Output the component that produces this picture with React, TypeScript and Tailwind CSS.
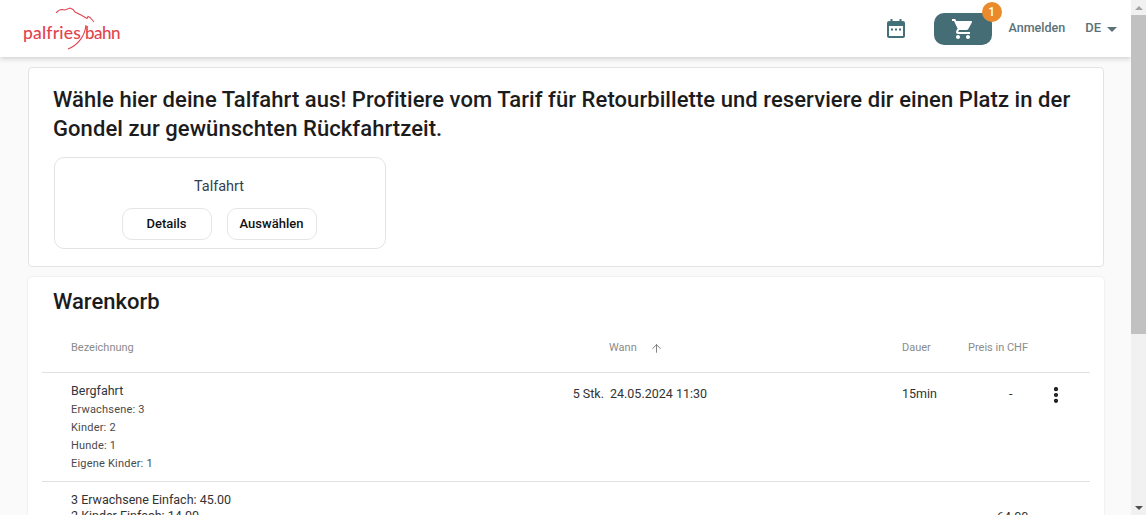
import { ArrowUp, EllipsisVertical } from 'lucide-react';

function Logo() {
  return (
    <div className="relative w-[100px] h-[46px] mt-[6px]">
      {/* Mountain ridge and the slash between the words */}
      <svg className="absolute left-0 top-0" width="100" height="46" viewBox="0 0 100 46" fill="none">
        <path
          d="M33 7 C35 4.5 37 3.5 39 3.5 L42 4 L47 2 L50 3.5 L52 6 L58 9 L64 12.5 L65 10.5 L67 11.5 L71 16"
          stroke="#e2444e"
          strokeWidth="1.1"
        />
        <path d="M63 19 C62 30 55 39 45 43" stroke="#e2444e" strokeWidth="1.1" />
      </svg>
      <span className="absolute left-0 top-[15px] font-['Lato',sans-serif] text-[17.5px] leading-[24px] font-medium text-[#e2444e] tracking-[0.2px]">
        palfries
      </span>
      <span className="absolute left-[62px] top-[15px] font-['Lato',sans-serif] text-[17px] leading-[24px] font-medium text-[#e2444e] tracking-[-0.5px]">
        bahn
      </span>
    </div>
  );
}

function CalendarIcon() {
  return (
    <svg width="18" height="19" viewBox="0 0 18 19" fill="#44707a">
      <rect x="3.5" y="0" width="2" height="3" />
      <rect x="12.5" y="0" width="2" height="3" />
      <path d="M2 2h14a2 2 0 0 1 2 2v13a2 2 0 0 1-2 2H2a2 2 0 0 1-2-2V4a2 2 0 0 1 2-2zm0 5v10h14V7H2z" fillRule="evenodd" />
      <rect x="4" y="9.5" width="2" height="2" />
      <rect x="8" y="9.5" width="2" height="2" />
      <rect x="12" y="9.5" width="2" height="2" />
    </svg>
  );
}

function CartIcon() {
  return (
    <svg width="24" height="24" viewBox="0 0 24 24" fill="#ffffff">
      <path d="M7 18c-1.1 0-1.99.9-1.99 2S5.9 22 7 22s2-.9 2-2-.9-2-2-2zM1 2v2h2l3.6 7.59-1.35 2.45c-.16.28-.25.61-.25.96 0 1.1.9 2 2 2h12v-2H7.42c-.14 0-.25-.11-.25-.25l.03-.12.9-1.63h7.45c.75 0 1.41-.41 1.75-1.03l3.58-6.49c.08-.14.12-.31.12-.48 0-.55-.45-1-1-1H5.21l-.94-2H1zm16 16c-1.1 0-1.99.9-1.99 2s.89 2 1.99 2 2-.9 2-2-.9-2-2-2z" />
    </svg>
  );
}

function Header() {
  return (
    <header className="h-[57px] shrink-0 bg-white shadow-[0_2px_5px_rgba(0,0,0,0.16)] flex items-start pl-[23px] relative z-10">
      <Logo />
      <div className="ml-auto flex items-start">
        <div className="mt-[19px] mr-[29px]">
          <CalendarIcon />
        </div>
        <button className="relative mt-[13px] w-[58px] h-[32px] rounded-[10px] bg-[#446d75] flex items-center justify-center">
          <CartIcon />
          <span className="absolute -top-[11px] -right-[10px] w-[20px] h-[20px] rounded-full bg-[#ea8a2a] text-white text-[12px] font-medium flex items-center justify-center">
            1
          </span>
        </button>
        <span className="mt-[19px] ml-[17px] text-[12.5px] leading-[18px] font-medium text-[#5b7178]">Anmelden</span>
        <span className="mt-[19px] ml-[20px] text-[13px] leading-[18px] font-medium text-[#5b7178]">DE</span>
        <span className="mt-[27px] ml-[6px] mr-[14px] w-0 h-0 border-x-[5px] border-x-transparent border-t-[5px] border-t-[#5b7178]" />
      </div>
    </header>
  );
}

function OutlineButton({ label }: { label: string }) {
  return (
    <button className="w-[90px] h-[32px] rounded-[10px] border border-[#e5e5e5] bg-white text-[13px] font-medium text-[#111]">
      {label}
    </button>
  );
}

function TalfahrtCard() {
  return (
    <section className="h-[200px] rounded-[4px] border border-[#e3e3e3] bg-white pl-[25px] pt-[17px]">
      <h1 className="-ml-[1px] text-[22px] leading-[29px] font-medium tracking-[0.07px] text-[#1c1c1c]">
        Wähle hier deine Talfahrt aus! Profitiere vom Tarif für Retourbillette und reserviere dir einen Platz in der
        Gondel zur gewünschten Rückfahrtzeit.
      </h1>
      <div className="mt-[14px] w-[332px] h-[92px] rounded-[10px] border border-[#e3e3e3] flex flex-col items-center pt-[19px] pr-[2px]">
        <div className="text-[14.5px] leading-[19px] text-[#333f4d]">Talfahrt</div>
        <div className="mt-[12px] flex gap-[15px]">
          <OutlineButton label="Details" />
          <OutlineButton label="Auswählen" />
        </div>
      </div>
    </section>
  );
}

function CartTable() {
  return (
    <section className="mt-[10px] rounded-[4px] bg-white shadow-[0_0_2px_rgba(0,0,0,0.12)] px-[14px] pt-[11px]">
      <h2 className="pl-[11px] text-[22px] leading-[28px] font-medium text-[#1c1c1c]">Warenkorb</h2>

      {/* Head */}
      <div className="mt-[12px] h-[45px] flex items-start pt-[12px] text-[11px] leading-[16px] text-[#8b8b8b] border-b border-[#e0e0e0]">
        <div className="w-[540px] pl-[29px]">Bezeichnung</div>
        <div className="w-[320px] pl-[27px] flex items-center gap-[13px]">
          Wann <ArrowUp size={13} strokeWidth={1.5} className="text-[#666]" />
        </div>
        <div className="w-[66px]">Dauer</div>
        <div>Preis in CHF</div>
      </div>

      {/* Bergfahrt */}
      <div className="h-[109px] flex items-start border-b border-[#e0e0e0] text-[#333]">
        <div className="w-[500px] pl-[29px] pt-[8px]">
          <div className="text-[12.5px] leading-[20px] text-[#2f3540]">Bergfahrt</div>
          <div className="text-[11px] leading-[18px] tracking-[0.2px] text-[#4a4a4a]">Erwachsene: 3</div>
          <div className="text-[11px] leading-[18px] tracking-[0.2px] text-[#4a4a4a]">Kinder: 2</div>
          <div className="text-[11px] leading-[18px] tracking-[0.2px] text-[#4a4a4a]">Hunde: 1</div>
          <div className="text-[11px] leading-[18px] tracking-[0.2px] text-[#4a4a4a]">Eigene Kinder: 1</div>
        </div>
        <div className="w-[62px] pt-[12px] text-right text-[12.5px] leading-[18px]">5 Stk.</div>
        <div className="w-[298px] pl-[6px] pt-[12px] text-[12.5px] leading-[18px]">24.05.2024 11:30</div>
        <div className="w-[107px] pt-[12px] text-[12.5px] leading-[18px]">15min</div>
        <div className="w-[34px] pt-[12px] text-[12.5px] leading-[18px]">-</div>
        <div className="pt-[12px] pl-[3px] text-[#111]">
          <EllipsisVertical size={20} strokeWidth={3} />
        </div>
      </div>

      {/* Tarife */}
      <div className="flex items-start text-[12.5px] leading-[16px] text-[#333]">
        <div className="w-[955px] pl-[29px] pt-[10px]">
          <div>3 Erwachsene Einfach: 45.00</div>
          <div>2 Kinder Einfach: 14.00</div>
        </div>
        <div className="pt-[27px]">64.00</div>
      </div>
    </section>
  );
}

function Scrollbar() {
  return (
    <div className="w-[15px] shrink-0 bg-[#f1f1f1] flex flex-col items-center">
      <div className="h-[15px] flex items-center">
        <span className="w-0 h-0 border-x-[4px] border-x-transparent border-b-[4px] border-b-[#a3a3a3]" />
      </div>
      <div className="w-[15px] h-[319px] bg-[#c1c1c1]" />
      <div className="mt-auto h-[15px] flex items-center">
        <span className="w-0 h-0 border-x-[4px] border-x-transparent border-t-[4px] border-t-[#505050]" />
      </div>
    </div>
  );
}

export default function App() {
  return (
    <div className="h-[515px] w-[1146px] flex overflow-hidden bg-[#fafafa] font-['Roboto',sans-serif]">
      <div className="flex-1 min-w-0 flex flex-col overflow-hidden">
        <Header />
        <main className="ml-[28px] mr-[27px] mt-[10px]">
          <TalfahrtCard />
          <CartTable />
        </main>
      </div>
      <Scrollbar />
    </div>
  );
}
